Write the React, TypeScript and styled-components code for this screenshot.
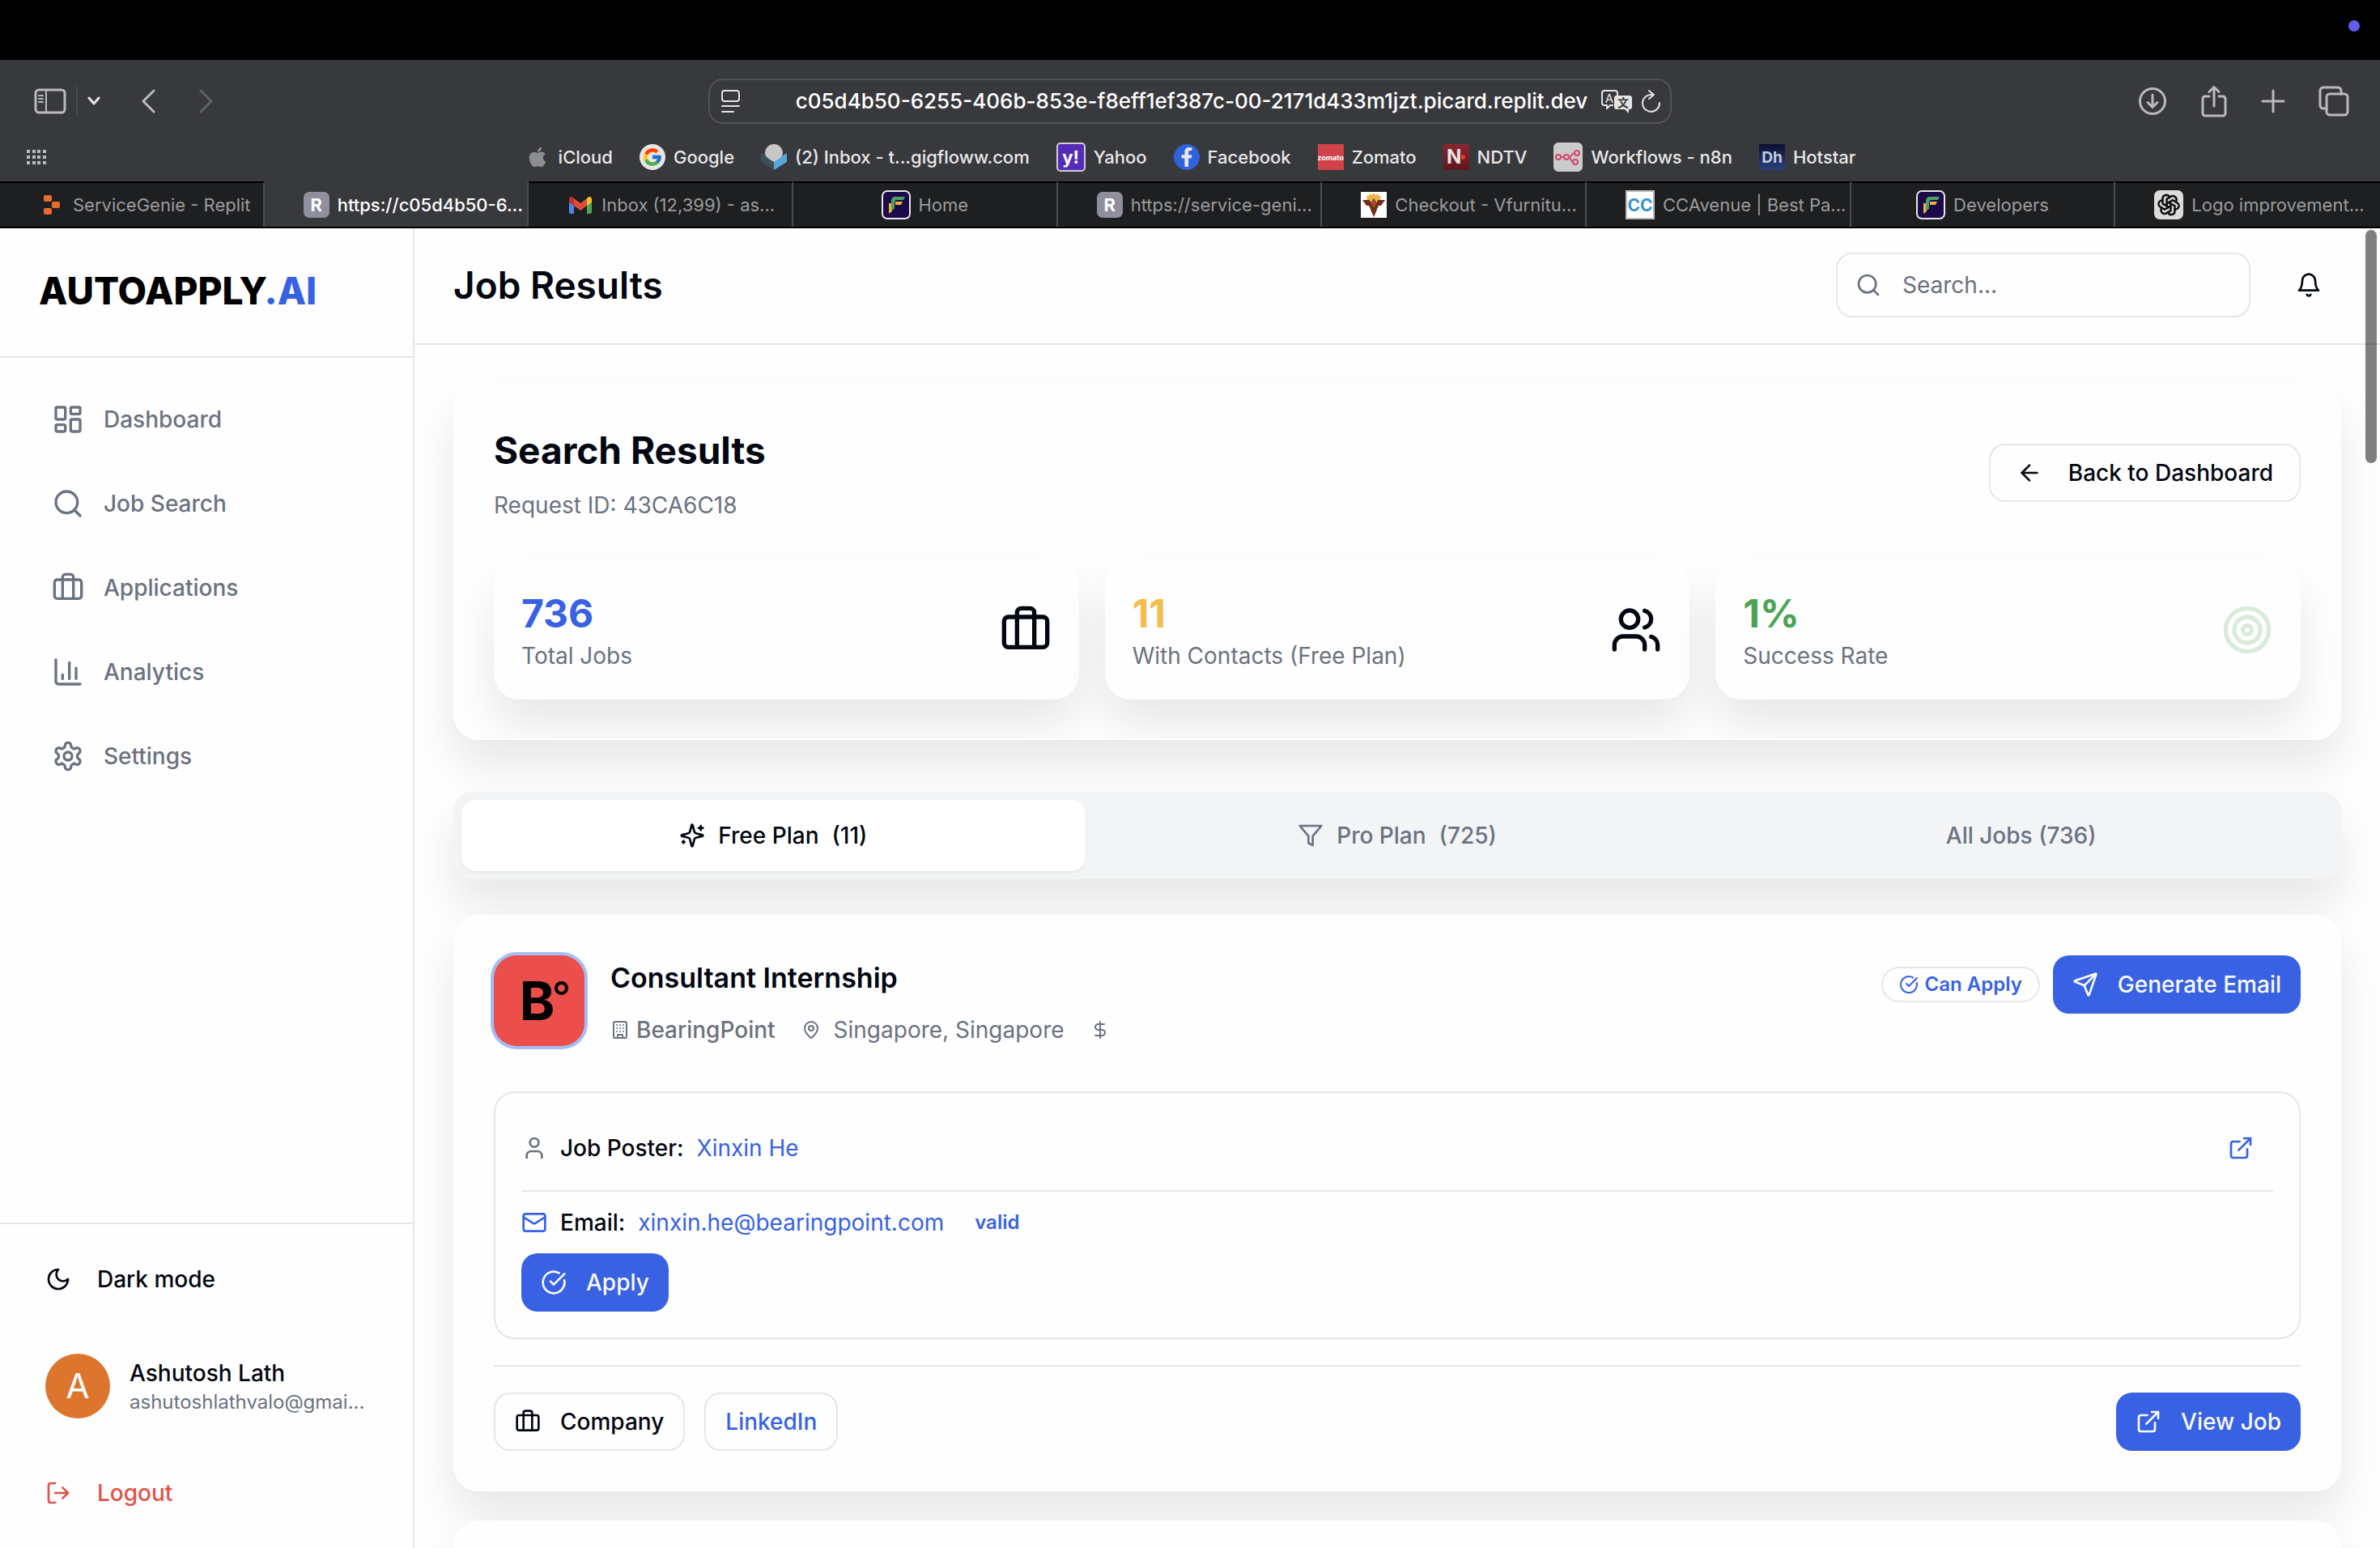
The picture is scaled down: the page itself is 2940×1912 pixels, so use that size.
import React from "react";
import styled, { createGlobalStyle, css } from "styled-components";
import {
  ArrowLeft,
  Briefcase,
  ChartColumn,
  CircleCheckBig,
  DollarSign,
  ExternalLink,
  LayoutDashboard,
  LogOut,
  Mail,
  MapPin,
  Search,
  Send,
  Target,
  User,
  Users,
} from "lucide-react";
import { FaApple, FaFacebookF } from "react-icons/fa";
import { FcGoogle } from "react-icons/fc";
import { TbBrandOpenai } from "react-icons/tb";

const c = {
  chrome: "#38393c",
  tab: "#1e1f21",
  chromeLine: "#515255",
  chromeIcon: "#b9babc",
  bg: "#fefefe",
  border: "#e5e6ec",
  text: "#030711",
  muted: "#6b7280",
  primary: "#3862e3",
  green: "#4aa553",
  amber: "#f3bf4b",
  red: "#e2524a",
  shadow: "0 32px 56px rgba(0, 0, 0, 0.09)",
};

const GlobalStyle = createGlobalStyle`
  *, *::before, *::after { box-sizing: border-box; }
  body {
    margin: 0;
    background: ${c.bg};
    color: ${c.text};
    font-family: Inter, "Liberation Sans", sans-serif;
    font-size: 28px;
    line-height: 40px;
  }
  button, input { font: inherit; color: inherit; }
  button { cursor: pointer; }
  a { color: inherit; text-decoration: none; }
  h1, h2, h3, p, ul { margin: 0; padding: 0; }
  svg { display: block; flex-shrink: 0; }
`;

/* ---------- icons ---------- */

type IconProps = { size?: number; children?: React.ReactNode };

const StrokeIcon = ({ size = 32, children }: IconProps) => (
  <svg
    width={size}
    height={size}
    viewBox="0 0 24 24"
    fill="none"
    stroke="currentColor"
    strokeWidth={2}
    strokeLinecap="round"
    strokeLinejoin="round"
    aria-hidden="true"
  >
    {children}
  </svg>
);

const GearIcon = ({ size }: IconProps) => (
  <StrokeIcon size={size}>
    <path d="M12.22 2h-.44a2 2 0 0 0-2 2v.18a2 2 0 0 1-1 1.73l-.43.25a2 2 0 0 1-2 0l-.15-.08a2 2 0 0 0-2.73.73l-.22.38a2 2 0 0 0 .73 2.73l.15.1a2 2 0 0 1 1 1.72v.51a2 2 0 0 1-1 1.74l-.15.09a2 2 0 0 0-.73 2.73l.22.38a2 2 0 0 0 2.73.73l.15-.08a2 2 0 0 1 2 0l.43.25a2 2 0 0 1 1 1.73V20a2 2 0 0 0 2 2h.44a2 2 0 0 0 2-2v-.18a2 2 0 0 1 1-1.73l.43-.25a2 2 0 0 1 2 0l.15.08a2 2 0 0 0 2.73-.73l.22-.39a2 2 0 0 0-.73-2.73l-.15-.08a2 2 0 0 1-1-1.74v-.5a2 2 0 0 1 1-1.74l.15-.09a2 2 0 0 0 .73-2.73l-.22-.38a2 2 0 0 0-2.73-.73l-.15.08a2 2 0 0 1-2 0l-.43-.25a2 2 0 0 1-1-1.73V4a2 2 0 0 0-2-2z" />
    <circle cx="12" cy="12" r="3" />
  </StrokeIcon>
);

const MoonIcon = () => (
  <StrokeIcon>
    <path d="M12 3a6 6 0 0 0 9 9 9 9 0 1 1-9-9Z" />
  </StrokeIcon>
);

const BellIcon = () => (
  <StrokeIcon>
    <path d="M6 8a6 6 0 0 1 12 0c0 7 3 9 3 9H3s3-2 3-9" />
    <path d="M10.3 21a1.94 1.94 0 0 0 3.4 0" />
  </StrokeIcon>
);

const SparklesIcon = () => (
  <StrokeIcon>
    <path d="M9.937 15.5A2 2 0 0 0 8.5 14.063l-6.135-1.582a.5.5 0 0 1 0-.962L8.5 9.936A2 2 0 0 0 9.937 8.5l1.582-6.135a.5.5 0 0 1 .963 0L14.063 8.5A2 2 0 0 0 15.5 9.937l6.135 1.581a.5.5 0 0 1 0 .964L15.5 14.063a2 2 0 0 0-1.437 1.437l-1.582 6.135a.5.5 0 0 1-.963 0z" />
    <path d="M20 3v4M22 5h-4M4 17v2M5 18H3" />
  </StrokeIcon>
);

const FilterIcon = () => (
  <StrokeIcon>
    <polygon points="22 3 2 3 10 12.46 10 19 14 21 14 12.46 22 3" />
  </StrokeIcon>
);

const BuildingIcon = () => (
  <StrokeIcon size={24}>
    <rect width="16" height="20" x="4" y="2" rx="2" ry="2" />
    <path d="M9 22v-4h6v4M8 6h.01M16 6h.01M12 6h.01M12 10h.01M12 14h.01M16 10h.01M16 14h.01M8 10h.01M8 14h.01" />
  </StrokeIcon>
);

const LineArt = styled.svg`
  fill: none;
  stroke: currentColor;
  stroke-width: 3;
  stroke-linecap: round;
  stroke-linejoin: round;
`;

const PanelGlyph = () => (
  <LineArt width="40" height="32" viewBox="0 0 40 32">
    <rect x="2" y="2" width="36" height="28" rx="4" />
    <path d="M15 2v28" strokeWidth="2" />
    <path d="M6 9h5M6 13h5M6 17h5" strokeWidth="2" />
  </LineArt>
);
const Chevron = ({ d, w, h }: { d: string; w: number; h: number }) => (
  <LineArt width={w} height={h} viewBox={`0 0 ${w} ${h}`}>
    <path d={d} />
  </LineArt>
);
const ReaderGlyph = () => (
  <LineArt width="24" height="30" viewBox="0 0 24 30">
    <rect x="1" y="2" width="21" height="13" rx="3" strokeWidth="2" />
    <path d="M1 21h21M1 28h14" strokeWidth="2" />
  </LineArt>
);
const TranslateGlyph = () => (
  <svg width="40" height="30" viewBox="0 0 40 30" fill="none">
    <path
      d="M16 20h-4l-4 4v-4H5a3 3 0 0 1-3-3V5a3 3 0 0 1 3-3h13a3 3 0 0 1 3 3v3"
      stroke="#e4e4e5"
      strokeWidth="2"
      strokeLinejoin="round"
    />
    <text x="11" y="17" fontSize="15" textAnchor="middle" fill="#e4e4e5" fontFamily="Inter, sans-serif">A</text>
    <path d="M20 8h16a3 3 0 0 1 3 3v11a3 3 0 0 1-3 3h-1v5l-5-5H20a3 3 0 0 1-3-3V11a3 3 0 0 1 3-3z" fill="#e4e4e5" />
    <text x="28" y="22" fontSize="14" textAnchor="middle" fill="#38393c" fontWeight="700" fontFamily="'Noto Sans CJK SC', sans-serif">文</text>
  </svg>
);
const ReloadGlyph = () => (
  <LineArt width="26" height="30" viewBox="0 0 26 30">
    <path d="M23 17A10.500 10.500 0 1 1 14 7" strokeWidth="2" />
    <path d="M10 2l6 5-6 5" strokeWidth="2" />
  </LineArt>
);
const DownloadGlyph = () => (
  <LineArt width="36" height="36" viewBox="0 0 36 36">
    <circle cx="18" cy="18" r="15.500" />
    <path d="M18 10v15M12 19.500l6 6 6-6" />
  </LineArt>
);
const ShareGlyph = () => (
  <LineArt width="34" height="40" viewBox="0 0 34 40">
    <path d="M11 14H6a3 3 0 0 0-3 3v18a3 3 0 0 0 3 3h22a3 3 0 0 0 3-3V17a3 3 0 0 0-3-3h-5" />
    <path d="M17 26V3M11 8.500L17 2.500l6 6" />
  </LineArt>
);
const PlusGlyph = () => (
  <LineArt width="30" height="30" viewBox="0 0 30 30">
    <path d="M15 2v26M2 15h26" />
  </LineArt>
);
const TabsGlyph = () => (
  <LineArt width="38" height="38" viewBox="0 0 38 38">
    <rect x="10" y="10" width="26" height="26" rx="4" />
    <path d="M10 28H6a4 4 0 0 1-4-4V6a4 4 0 0 1 4-4h18a4 4 0 0 1 4 4v4" />
  </LineArt>
);
const DotsGlyph = () => (
  <svg width="24" height="18" viewBox="0 0 24 18" fill="currentColor">
    {[0, 7, 14].map((y) => [0, 7, 13, 20].map((x) => <rect key={`${x}-${y}`} x={x} y={y} width="4" height="4" />))}
  </svg>
);

/* ---------- favicons ---------- */

const Favicon = styled.span<{ $bg?: string; $fg?: string; $size?: number; $radius?: number; $ring?: string }>`
  display: inline-flex;
  align-items: center;
  justify-content: center;
  flex-shrink: 0;
  overflow: hidden;
  width: ${(p) => (p.$ring ? 36 : 32)}px;
  height: ${(p) => (p.$ring ? 36 : 32)}px;
  border-radius: ${(p) => p.$radius ?? 0}px;
  border: ${(p) => (p.$ring ? `2px solid ${p.$ring}` : "0")};
  background: ${(p) => p.$bg ?? "transparent"};
  color: ${(p) => p.$fg ?? "#fff"};
  font-size: ${(p) => p.$size ?? 20}px;
  font-weight: 700;
  line-height: 1;
`;

const ReplitR = () => <Favicon $bg="#8f8f9d" $radius={7} $size={22}>R</Favicon>;
const ReplitMark = () => (
  <Favicon>
    <svg width="32" height="32" viewBox="0 0 32 32" fill="#e96b2d">
      <rect x="6" y="4" width="10" height="8" rx="2" />
      <rect x="16" y="12" width="10" height="8" rx="2" />
      <rect x="6" y="20" width="10" height="8" rx="2" />
    </svg>
  </Favicon>
);
const GmailMark = () => (
  <Favicon>
    <svg width="32" height="32" viewBox="0 0 32 32">
      <path d="M2 10h6v17H4a2 2 0 0 1-2-2z" fill="#4a86ee" />
      <path d="M24 10h6v15a2 2 0 0 1-2 2h-4z" fill="#4fa657" />
      <path d="M24 8l1-1c2-2 5-1 5 2v4l-6 4z" fill="#f5bd2f" />
      <path d="M2 13V9c0-3 3-4 5-2l1 1v9z" fill="#b93529" />
      <path d="M8 8l8 6 8-6v9l-8 6-8-6z" fill="#e04c3c" />
    </svg>
  </Favicon>
);
const FMark = () => (
  <Favicon $bg="#1d0b49" $radius={7} $ring="#e7e6ea">
    <svg width="32" height="32" viewBox="0 0 32 32">
      <path d="M7 14h4v10l-4 3z" fill="#f0b13c" />
      <path d="M15 12h9l-2 4h-7z" fill="#f0b13c" />
      <path d="M10 12c0-4 2-6 5-6h12l-2 4h-8c-2 0-3 1-3 3v8l-4 2z" fill="#47a466" />
    </svg>
  </Favicon>
);
const ShopMark = () => (
  <Favicon $bg="#fff">
    <svg width="32" height="32" viewBox="0 0 32 32">
      <path d="M16 1l2 3 3-2 1 3 3 0-1 4 2 2H6l2-2-1-4 3 0 1-3 3 2z" fill="#eeb24a" />
      <path d="M2 10h9l5 9 5-9h9l-5 7h-3l-3 6h-6l-3-6H7z" fill="#6e2f14" />
      <path d="M16 8l4 5-4 6-4-6z" fill="#a14a22" />
      <path d="M12 22h8l-4 9z" fill="#6e2f14" />
    </svg>
  </Favicon>
);
const InboxMark = () => (
  <Favicon>
    <svg width="32" height="32" viewBox="0 0 32 32">
      <path d="M0 11l16 6v15L0 22z" fill="#3f4f58" />
      <path d="M32 11l-16 10v11l16-10z" fill="#58a6dc" />
      <path d="M5 11a11 11 0 0 1 22 0c0 5-6 8-11 11C11 19 5 16 5 11z" fill="#c7c7c8" />
    </svg>
  </Favicon>
);
const NewsMark = () => (
  <Favicon $bg="linear-gradient(#8b2630, #5f171d)" $radius={3} $fg="#e6e6e6" $size={24}>
    N
    <svg width="5" height="6" viewBox="0 0 5 6">
      <circle cx="2" cy="3" r="3" fill="#dc3b34" />
    </svg>
  </Favicon>
);
const FlowMark = () => (
  <Favicon $bg="#cbcbcc" $radius={6} $ring="#cbcbcc">
    <svg width="32" height="32" viewBox="0 0 32 32" fill="none" stroke="#d0496e" strokeWidth="2">
      <circle cx="4" cy="16" r="3" />
      <circle cx="14" cy="16" r="3" />
      <circle cx="27" cy="11" r="3" />
      <circle cx="25" cy="22" r="3" />
      <path d="M7 16h4M17 16c4 0 3-5 7-5M17 16c3 0 2 6 5 6" />
    </svg>
  </Favicon>
);

/* ---------- browser chrome ---------- */

const Window = styled.div`
  position: relative;
  display: flex;
  flex-direction: column;
  height: 100vh;
  overflow: hidden;
`;

const MenuBar = styled.div`
  display: flex;
  justify-content: flex-end;
  align-items: flex-start;
  height: 74px;
  flex-shrink: 0;
  padding: 25px;
  background: #000;
`;

const RecordingDot = styled.span`
  width: 14px;
  height: 14px;
  border-radius: 50%;
  background: #625de8;
`;

const Toolbar = styled.div`
  display: grid;
  grid-template-columns: 1fr minmax(0, 1190px) 1fr;
  align-items: center;
  height: 102px;
  flex-shrink: 0;
  padding: 0 38px;
  background: ${c.chrome};
  color: ${c.chromeIcon};
`;

const ToolGroup = styled.div<{ $end?: boolean }>`
  display: flex;
  align-items: center;
  justify-content: ${(p) => (p.$end ? "flex-end" : "flex-start")};
  gap: ${(p) => (p.$end ? 41 : 12)}px;
  padding-left: 4px;
`;

const ToolButton = styled.button<{ $dim?: boolean; $bright?: boolean; $gap?: number }>`
  display: inline-flex;
  padding: 0;
  border: 0;
  background: none;
  color: ${(p) => (p.$dim ? "#606164" : p.$bright ? "#e4e4e5" : "inherit")};
  margin-left: ${(p) => p.$gap ?? 0}px;
`;

const ToolDivider = styled.span`
  width: 2px;
  height: 36px;
  background: #4a4b4e;
`;

const AddressBar = styled.div`
  display: flex;
  align-items: center;
  gap: 10px;
  height: 56px;
  padding: 0 10px 0 14px;
  border: 2px solid ${c.chromeLine};
  border-radius: 18px;
  color: #e4e4e5;
`;

const AddressInput = styled.input`
  flex: 1;
  min-width: 0;
  border: 0;
  padding: 0 0 0 52px;
  background: none;
  color: #fff;
  font-size: 26px;
  font-weight: 500;
  text-align: center;
`;

const BookmarkBar = styled.nav`
  display: grid;
  grid-template-columns: 1fr auto 1fr;
  align-items: center;
  height: 48px;
  flex-shrink: 0;
  padding: 0 33px 14px;
  background: ${c.chrome};
  color: ${c.chromeIcon};
`;

const Bookmarks = styled.div`
  display: flex;
  align-items: center;
  gap: 33px;
`;

const Bookmark = styled.a`
  display: flex;
  align-items: center;
  gap: 10px;
  color: #e9e9ea;
  font-size: 22px;
  font-weight: 500;
  line-height: 34px;
  white-space: nowrap;
`;

const TabStrip = styled.div`
  display: grid;
  grid-template-columns: repeat(9, minmax(0, 1fr));
  height: 58px;
  flex-shrink: 0;
  background: ${c.tab};
  border-bottom: 2px solid #000;
`;

const BrowserTab = styled.button<{ $active?: boolean; $full?: boolean }>`
  display: flex;
  align-items: center;
  justify-content: ${(p) => (p.$full ? "flex-start" : "center")};
  gap: 10px;
  padding: 0 0 0 ${(p) => (p.$full ? 48 : 0)}px;
  border: 0;
  border-top: 2px solid ${(p) => (p.$active ? c.chrome : "#000")};
  border-right: 2px solid #4b4c4f;
  background: ${(p) => (p.$active ? c.chrome : c.tab)};
  color: ${(p) => (p.$active ? "#fff" : "#9b9c9e")};
  font-size: 22px;
  font-weight: ${(p) => (p.$active ? 500 : 400)};
  white-space: nowrap;
  overflow: hidden;
  &:last-child { border-right: 0; }
`;

/* ---------- app shell ---------- */

const Shell = styled.div`
  display: flex;
  flex: 1;
  min-height: 0;
`;

const Sidebar = styled.aside`
  position: relative;
  z-index: 2;
  display: flex;
  flex-direction: column;
  width: 512px;
  flex-shrink: 0;
  border-right: 2px solid ${c.border};
  background: ${c.bg};
`;

const Brand = styled.div`
  padding: 49px 48px 53px;
  border-bottom: 2px solid ${c.border};
  color: #000;
  font-size: 46px;
  font-weight: 800;
  line-height: 56px;
  white-space: nowrap;
  span { color: ${c.primary}; }
`;

const Nav = styled.nav`
  display: flex;
  flex-direction: column;
  flex: 1;
  gap: 16px;
  padding: 32px;
`;

const NavLink = styled.a`
  display: flex;
  align-items: center;
  gap: 24px;
  height: 88px;
  padding: 0 32px;
  color: ${c.muted};
  font-weight: 500;
`;

const SideFooter = styled.div`
  display: flex;
  flex-direction: column;
  gap: 32px;
  padding: 32px;
  border-top: 2px solid ${c.border};
`;

const SideButton = styled.button<{ $danger?: boolean }>`
  display: flex;
  align-items: center;
  gap: 32px;
  height: 72px;
  padding: 0 24px;
  border: 0;
  background: none;
  color: ${(p) => (p.$danger ? c.red : c.text)};
  font-weight: 500;
`;

const Profile = styled.div`
  display: flex;
  align-items: center;
  gap: 24px;
  padding: 24px;
`;

const Initial = styled.span`
  display: flex;
  align-items: center;
  justify-content: center;
  width: 80px;
  height: 80px;
  flex-shrink: 0;
  border-radius: 50%;
  background: #dd752e;
  color: #fff;
  font-size: 42px;
`;

const ProfileName = styled.p`
  font-weight: 500;
`;

const ProfileMail = styled.p`
  color: ${c.muted};
  font-size: 24px;
  line-height: 32px;
  white-space: nowrap;
`;

const Main = styled.div`
  flex: 1;
  min-width: 0;
  display: flex;
  flex-direction: column;
`;

const PageHeader = styled.header`
  position: relative;
  z-index: 1;
  display: flex;
  align-items: center;
  gap: 32px;
  flex-shrink: 0;
  padding: 30px 48px 32px;
  border-bottom: 2px solid ${c.border};
  background: ${c.bg};
`;

const PageTitle = styled.h1`
  flex: 1;
  font-size: 46px;
  font-weight: 600;
  line-height: 64px;
`;

const SearchField = styled.label`
  display: flex;
  align-items: center;
  gap: 26px;
  width: 512px;
  height: 80px;
  padding: 0 22px;
  border: 2px solid ${c.border};
  border-radius: 20px;
  color: ${c.muted};
`;

const SearchInput = styled.input`
  flex: 1;
  min-width: 0;
  padding: 0;
  border: 0;
  background: none;
  &::placeholder { color: ${c.muted}; opacity: 1; }
`;

const IconButton = styled.button<{ $link?: boolean }>`
  display: flex;
  align-items: center;
  justify-content: center;
  width: 80px;
  height: ${(p) => (p.$link ? 72 : 80)}px;
  padding: 0;
  border: 0;
  background: none;
  color: ${(p) => (p.$link ? c.primary : c.text)};
`;

const Content = styled.main`
  flex: 1;
  min-height: 0;
  overflow: hidden;
  padding: 48px;
`;

const surface = css`
  border: 2px solid ${c.bg};
  border-radius: 32px;
  background: ${c.bg};
  box-shadow: ${c.shadow};
`;

const Summary = styled.section`
  ${surface}
  display: flex;
  flex-direction: column;
  gap: 48px;
  padding: 48px;
  overflow: hidden;
`;

const Row = styled.div<{ $gap?: number; $between?: boolean }>`
  display: flex;
  align-items: center;
  justify-content: ${(p) => (p.$between ? "space-between" : "flex-start")};
  gap: ${(p) => p.$gap ?? 16}px;
`;

const SummaryTitle = styled.h2`
  margin-bottom: 16px;
  font-size: 46px;
  font-weight: 700;
  line-height: 64px;
`;

const Muted = styled.p`
  color: ${c.muted};
`;

const Button = styled.button<{ $kind?: "primary" | "outline"; $link?: boolean; $wide?: boolean }>`
  display: inline-flex;
  align-items: center;
  gap: ${(p) => (p.$wide ? 32 : 24)}px;
  height: 72px;
  padding: 0 ${(p) => (p.$wide ? 32 : 24)}px;
  border-radius: 20px;
  font-weight: 500;
  white-space: nowrap;
  ${(p) =>
    p.$kind === "primary"
      ? css`
          border: 0;
          background: ${c.primary};
          color: #f8fafc;
        `
      : css`
          border: 2px solid ${c.border};
          background: ${c.bg};
          color: ${p.$link ? c.primary : c.text};
        `}
`;

const StatGrid = styled.div`
  display: grid;
  grid-template-columns: repeat(3, 1fr);
  gap: 32px;
`;

const StatCard = styled.div`
  ${surface}
  display: flex;
  align-items: center;
  justify-content: space-between;
  padding: 32px;
`;

const StatValue = styled.p<{ $color: string }>`
  color: ${(p) => p.$color};
  font-size: 48px;
  font-weight: 700;
  line-height: 64px;
`;

const StatIcon = styled.span<{ $faded?: boolean }>`
  color: ${(p) => (p.$faded ? c.green : c.text)};
  opacity: ${(p) => (p.$faded ? 0.2 : 1)};
`;

const PlanTabs = styled.div`
  display: grid;
  grid-template-columns: repeat(3, 1fr);
  margin: 64px 0 44px;
  padding: 10px;
  border-radius: 24px;
  background: #f2f4f6;
  box-shadow: ${c.shadow};
`;

const PlanTab = styled.button<{ $active?: boolean }>`
  display: flex;
  align-items: center;
  justify-content: center;
  gap: 16px;
  height: 88px;
  border: 0;
  border-radius: 18px;
  background: ${(p) => (p.$active ? "#fff" : "transparent")};
  box-shadow: ${(p) => (p.$active ? "0 2px 4px rgba(0, 0, 0, 0.06)" : "none")};
  color: ${(p) => (p.$active ? c.text : c.muted)};
  font-weight: 500;
`;

const JobCard = styled.article`
  ${surface}
  position: relative;
  min-height: 200px;
  margin-bottom: 36px;
  padding: 48px;
`;

const JobHead = styled.div`
  display: flex;
  align-items: flex-start;
  gap: 32px;
  margin-bottom: 56px;
`;

const CompanyLogo = styled.div`
  display: flex;
  align-items: center;
  justify-content: center;
  width: 112px;
  height: 112px;
  flex-shrink: 0;
  padding-left: 12px;
  border-radius: 28px;
  background: #eb4e4b;
  box-shadow: 0 0 0 4px #a5bdf6;
  color: #000;
  font-size: 66px;
  font-weight: 700;
  line-height: 1;
`;

const Degree = styled.span`
  width: 17px;
  height: 17px;
  margin-bottom: 32px;
  border: 4px solid #000;
  border-radius: 50%;
`;

const JobInfo = styled.div`
  flex: 1;
  min-width: 0;
`;

const JobTitle = styled.h3`
  margin-bottom: 16px;
  font-size: 34px;
  font-weight: 600;
  line-height: 56px;
`;

const MetaItem = styled.span<{ $gap?: number; $strong?: boolean }>`
  display: inline-flex;
  align-items: center;
  gap: ${(p) => p.$gap ?? 8}px;
  color: ${c.muted};
  font-weight: ${(p) => (p.$strong ? 500 : 400)};
`;

const Badge = styled.span<{ $plain?: boolean }>`
  display: inline-flex;
  align-items: center;
  gap: 8px;
  height: 44px;
  padding: 0 20px;
  border: 2px solid ${(p) => (p.$plain ? "transparent" : c.border)};
  border-radius: 22px;
  color: ${c.primary};
  font-size: 24px;
  font-weight: 600;
  line-height: 32px;
  white-space: nowrap;
`;

const ContactBox = styled.div`
  padding: 32px;
  border: 2px solid ${c.border};
  border-radius: 26px;
`;

const ContactLine = styled.div<{ $ruled?: boolean }>`
  display: flex;
  align-items: center;
  justify-content: space-between;
  padding-bottom: 16px;
  border-bottom: ${(p) => (p.$ruled ? `2px solid ${c.border}` : "0")};
  padding-top: ${(p) => (p.$ruled ? 0 : 16)}px;
`;

const ContactIcon = styled.span<{ $primary?: boolean }>`
  color: ${(p) => (p.$primary ? c.primary : c.muted)};
`;

const ContactLabel = styled.span`
  font-weight: 500;
`;

const ContactLink = styled.a`
  color: ${c.primary};
`;

const Actions = styled.div`
  display: flex;
  justify-content: space-between;
  margin-top: 32px;
  padding-top: 32px;
  border-top: 2px solid ${c.border};
`;

const ScrollThumb = styled.div`
  position: absolute;
  top: 284px;
  right: 4px;
  z-index: 3;
  width: 14px;
  height: 288px;
  border-radius: 7px;
  background: rgba(0, 0, 0, 0.5);
`;

/* ---------- data ---------- */

const bookmarks: { label: string; icon: React.ReactNode }[] = [
  { label: "iCloud", icon: <Favicon $fg="#8c8d8f"><FaApple size={28} /></Favicon> },
  { label: "Google", icon: <Favicon $bg="#e6e6e6" $radius={16}><FcGoogle size={26} /></Favicon> },
  { label: "(2) Inbox - t...gigfloww.com", icon: <InboxMark /> },
  { label: "Yahoo", icon: <Favicon $bg="#552bb8" $ring="#cfcfd2" $radius={5} $size={22}>y!</Favicon> },
  { label: "Facebook", icon: <Favicon $bg="#2f62dd" $radius={16} $fg="#e6e6e6"><FaFacebookF size={24} /></Favicon> },
  { label: "Zomato", icon: <Favicon $bg="#d0434a" $size={9}>zomato</Favicon> },
  { label: "NDTV", icon: <NewsMark /> },
  { label: "Workflows - n8n", icon: <FlowMark /> },
  { label: "Hotstar", icon: <Favicon $bg="linear-gradient(#0c1030, #28417f)" $fg="#c5cbe0" $size={19}>Dh</Favicon> },
];

const browserTabs: { label: string; icon: React.ReactNode; full?: boolean; active?: boolean }[] = [
  { label: "ServiceGenie - Replit", icon: <ReplitMark />, full: true },
  { label: "https://c05d4b50-6...", icon: <ReplitR />, full: true, active: true },
  { label: "Inbox (12,399) - as...", icon: <GmailMark />, full: true },
  { label: "Home", icon: <FMark /> },
  { label: "https://service-geni...", icon: <ReplitR />, full: true },
  { label: "Checkout - Vfurnitu...", icon: <ShopMark />, full: true },
  { label: "CCAvenue | Best Pa...", icon: <Favicon $bg="#fff" $fg="#3a93cf" $ring="#bdbdbd" $size={21}>CC</Favicon>, full: true },
  { label: "Developers", icon: <FMark /> },
  { label: "Logo improvement...", icon: <Favicon $bg="#dcdcdc" $fg="#111" $radius={7} $ring="#dcdcdc"><TbBrandOpenai size={30} /></Favicon>, full: true },
];

const navItems = [
  { label: "Dashboard", icon: <LayoutDashboard size={40} /> },
  { label: "Job Search", icon: <Search size={40} /> },
  { label: "Applications", icon: <Briefcase size={40} /> },
  { label: "Analytics", icon: <ChartColumn size={40} /> },
  { label: "Settings", icon: <GearIcon size={40} /> },
];

const stats = [
  { value: "736", label: "Total Jobs", color: c.primary, icon: <Briefcase size={64} /> },
  { value: "11", label: "With Contacts (Free Plan)", color: c.amber, icon: <Users size={64} /> },
  { value: "1%", label: "Success Rate", color: c.green, icon: <Target size={64} />, faded: true },
];

/* ---------- page ---------- */

export default function App() {
  return (
    <>
      <GlobalStyle />
      <Window>
        <MenuBar>
          <RecordingDot />
        </MenuBar>
        <Toolbar>
          <ToolGroup>
            <ToolButton aria-label="Show sidebar"><PanelGlyph /></ToolButton>
            <ToolDivider />
            <ToolButton aria-label="Tab groups" $bright><Chevron w={16} h={12} d="M2 2l6 7 6-7" /></ToolButton>
            <ToolButton aria-label="Back" $gap={38}><Chevron w={18} h={30} d="M16 2L3 15l13 13" /></ToolButton>
            <ToolButton aria-label="Forward" $dim $gap={42}><Chevron w={18} h={30} d="M2 2l13 13L2 28" /></ToolButton>
          </ToolGroup>
          <AddressBar>
            <ReaderGlyph />
            <AddressInput
              aria-label="Address"
              defaultValue="c05d4b50-6255-406b-853e-f8eff1ef387c-00-2171d433m1jzt.picard.replit.dev"
            />
            <ToolButton aria-label="Translate"><TranslateGlyph /></ToolButton>
            <ToolButton aria-label="Reload" $bright><ReloadGlyph /></ToolButton>
          </AddressBar>
          <ToolGroup $end>
            <ToolButton aria-label="Downloads"><DownloadGlyph /></ToolButton>
            <ToolButton aria-label="Share"><ShareGlyph /></ToolButton>
            <ToolButton aria-label="New tab"><PlusGlyph /></ToolButton>
            <ToolButton aria-label="Tab overview"><TabsGlyph /></ToolButton>
          </ToolGroup>
        </Toolbar>
        <BookmarkBar aria-label="Bookmarks">
          <DotsGlyph />
          <Bookmarks>
            {bookmarks.map((b) => (
              <Bookmark key={b.label} href="#">
                {b.icon}
                {b.label}
              </Bookmark>
            ))}
          </Bookmarks>
        </BookmarkBar>
        <TabStrip>
          {browserTabs.map((t) => (
            <BrowserTab key={t.label} $active={t.active} $full={t.full}>
              {t.icon}
              {t.label}
            </BrowserTab>
          ))}
        </TabStrip>

        <Shell>
          <Sidebar>
            <Brand>AUTOAPPLY<span>.AI</span></Brand>
            <Nav aria-label="Main">
              {navItems.map((n) => (
                <NavLink key={n.label} href="#">
                  {n.icon}
                  {n.label}
                </NavLink>
              ))}
            </Nav>
            <SideFooter>
              <SideButton><MoonIcon />Dark mode</SideButton>
              <Profile>
                <Initial>A</Initial>
                <div>
                  <ProfileName>Ashutosh Lath</ProfileName>
                  <ProfileMail>ashutoshlathvalo@gmai...</ProfileMail>
                </div>
              </Profile>
              <SideButton $danger><LogOut size={32} />Logout</SideButton>
            </SideFooter>
          </Sidebar>

          <Main>
            <PageHeader>
              <PageTitle>Job Results</PageTitle>
              <SearchField>
                <Search size={32} />
                <SearchInput type="text" placeholder="Search..." aria-label="Search" />
              </SearchField>
              <IconButton aria-label="Notifications"><BellIcon /></IconButton>
            </PageHeader>

            <Content>
              <Summary>
                <Row $between>
                  <div>
                    <SummaryTitle>Search Results</SummaryTitle>
                    <Muted>Request ID: 43CA6C18</Muted>
                  </div>
                  <Button $wide><ArrowLeft size={32} />Back to Dashboard</Button>
                </Row>
                <StatGrid>
                  {stats.map((s) => (
                    <StatCard key={s.label}>
                      <div>
                        <StatValue $color={s.color}>{s.value}</StatValue>
                        <Muted>{s.label}</Muted>
                      </div>
                      <StatIcon $faded={s.faded}>{s.icon}</StatIcon>
                    </StatCard>
                  ))}
                </StatGrid>
              </Summary>

              <PlanTabs role="tablist">
                <PlanTab role="tab" aria-selected="true" $active>
                  <SparklesIcon /><span>Free Plan</span><span>(11)</span>
                </PlanTab>
                <PlanTab role="tab" aria-selected="false">
                  <FilterIcon /><span>Pro Plan</span><span>(725)</span>
                </PlanTab>
                <PlanTab role="tab" aria-selected="false">All Jobs (736)</PlanTab>
              </PlanTabs>

              <JobCard>
                <JobHead>
                  <CompanyLogo>B<Degree /></CompanyLogo>
                  <JobInfo>
                    <JobTitle>Consultant Internship</JobTitle>
                    <Row $gap={32}>
                      <MetaItem $strong><BuildingIcon />BearingPoint</MetaItem>
                      <MetaItem $gap={16}><MapPin size={24} />Singapore, Singapore</MetaItem>
                      <MetaItem><DollarSign size={24} /></MetaItem>
                    </Row>
                  </JobInfo>
                  <Row>
                    <Badge><CircleCheckBig size={24} />Can Apply</Badge>
                    <Button $kind="primary"><Send size={32} />Generate Email</Button>
                  </Row>
                </JobHead>

                <ContactBox>
                  <ContactLine $ruled>
                    <Row>
                      <ContactIcon><User size={32} /></ContactIcon>
                      <ContactLabel>Job Poster:</ContactLabel>
                      <ContactLink href="#">Xinxin He</ContactLink>
                    </Row>
                    <IconButton aria-label="Open profile" $link><ExternalLink size={32} /></IconButton>
                  </ContactLine>
                  <ContactLine>
                    <Row>
                      <ContactIcon $primary><Mail size={32} /></ContactIcon>
                      <ContactLabel>Email:</ContactLabel>
                      <ContactLink href="#">xinxin.he@bearingpoint.com</ContactLink>
                      <Badge $plain>valid</Badge>
                    </Row>
                  </ContactLine>
                  <Button $kind="primary"><CircleCheckBig size={32} />Apply</Button>
                </ContactBox>

                <Actions>
                  <Row $gap={24}>
                    <Button><Briefcase size={32} />Company</Button>
                    <Button $link>LinkedIn</Button>
                  </Row>
                  <Button $kind="primary"><ExternalLink size={32} />View Job</Button>
                </Actions>
              </JobCard>

              <JobCard />
            </Content>
          </Main>
        </Shell>
        <ScrollThumb />
      </Window>
    </>
  );
}
